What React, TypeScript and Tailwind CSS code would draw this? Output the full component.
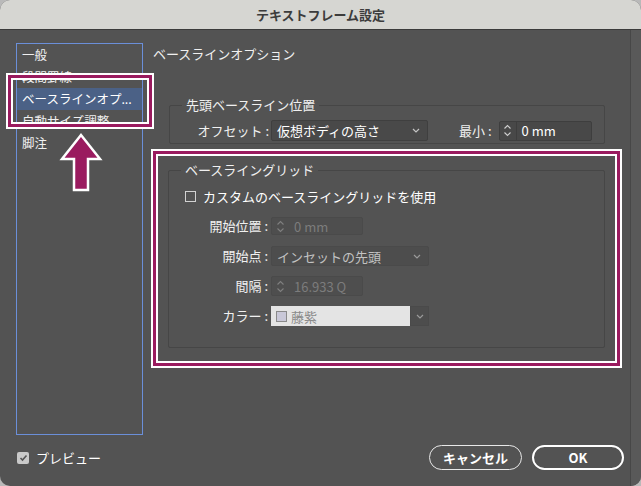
const Chevron = ({ className }: { className?: string }) => (
  <svg width="8" height="5" viewBox="0 0 8 5" className={className}>
    <path d="M1 1l3 3 3-3" fill="none" stroke="currentColor" strokeWidth="1.2" />
  </svg>
);

const StepIcon = ({ className }: { className?: string }) => (
  <svg width="9" height="15" viewBox="0 0 9 15" className={className}>
    <path d="M1.5 5.5L4.5 2.5l3 3M1.5 9.5l3 3 3-3" fill="none" stroke="currentColor" strokeWidth="1.1" />
  </svg>
);

const Label = ({ children }: { children: string }) => (
  <div className="w-[87px] shrink-0 text-right whitespace-nowrap">{children}</div>
);

const App = () => {
  const items = ['一般', '段間罫線', 'ベースラインオプ...', '自動サイズ調整', '脚注'];

  return (
    <div className="relative w-[641px] h-[486px] bg-[#b9b9b9] font-['Noto_Sans_CJK_JP','Noto_Sans',sans-serif] text-[13px] text-[#f0f0f0] overflow-hidden">
      <div className="flex flex-col h-full rounded-[10px] overflow-hidden bg-[#535353]">
        {/* title bar */}
        <div className="h-[30px] shrink-0 flex items-center justify-center bg-[#d6d6d2] border-b border-[#3b3b3b] text-[#3c3c3c] font-bold text-[13px] leading-none">
          テキストフレーム設定
        </div>

        <div className="flex flex-1 min-h-0">
          <div className="flex flex-col w-[630px]">
            <div className="flex pt-[13px] pl-[16px]">
              {/* sidebar */}
              <div className="w-[127px] h-[392px] shrink-0 border border-[#6b8fd9] text-[12.5px]">
                {items.map((it, i) => (
                  <div
                    key={it}
                    className={`h-[22px] leading-[22px] pl-[5px] pr-[3px] whitespace-nowrap ${i === 2 ? 'bg-[#4b6186] text-white' : ''}`}
                  >
                    {it}
                  </div>
                ))}
              </div>

              {/* main panel */}
              <div className="ml-[10px] flex-1">
                <div className="h-[22px] leading-[22px]">ベースラインオプション</div>

                <fieldset className="mt-[31px] ml-[16px] w-[436px] border border-[#464646] rounded-[2px] px-[12px] pb-[2px]">
                  <legend className="px-[4px] leading-[18px]">先頭ベースライン位置</legend>
                  <div className="flex items-center h-[21px] mt-[6px]">
                    <Label>オフセット :</Label>
                    <div className="ml-[2px] w-[157px] h-[21px] flex items-center justify-between pl-[5px] pr-[7px] bg-[#494949] border border-[#3f3f3f] rounded-[2px]">
                      <span className="leading-none text-white">仮想ボディの高さ</span>
                      <Chevron className="text-[#c4c4c4]" />
                    </div>
                    <div className="ml-[31px] whitespace-nowrap">最小 :</div>
                    <div className="ml-[7px] w-[93px] h-[20px] flex items-stretch bg-[#484848] border border-[#3e3e3e] rounded-[2px]">
                      <div className="w-[17px] flex items-center justify-center border-r border-[#3e3e3e] text-[#cfcfcf]">
                        <StepIcon />
                      </div>
                      <span className="pl-[5px] leading-[18px] text-white">0 mm</span>
                    </div>
                  </div>
                </fieldset>

                <fieldset className="mt-[17px] ml-[15px] w-[437px] border border-[#464646] rounded-[2px] px-[12px] pb-[21px]">
                  <legend className="px-[4px] leading-[18px]">ベースライングリッド</legend>
                  <div className="flex flex-col gap-[10px] mt-[7px]">
                    <div className="flex items-center h-[20px] ml-[4px]">
                      <div className="w-[11px] h-[11px] border border-[#d2d2d2]" />
                      <span className="ml-[7px] leading-none text-white">カスタムのベースライングリッドを使用</span>
                    </div>

                    <div className="flex items-center h-[20px]">
                      <Label>開始位置 :</Label>
                      <div className="ml-[3px] w-[92px] h-[18px] flex items-center bg-[#4e4e4e] border border-[#4a4a4a] rounded-[2px]">
                        <StepIcon className="ml-[4px] text-[#7f7f7f]" />
                        <span className="ml-[9px] leading-none text-[#7c7c7c]">0 mm</span>
                      </div>
                    </div>

                    <div className="flex items-center h-[20px]">
                      <Label>開始点 :</Label>
                      <div className="ml-[3px] w-[158px] h-[20px] flex items-center justify-between pl-[5px] pr-[7px] bg-[#4d4d4d] border border-[#4a4a4a] rounded-[2px]">
                        <span className="leading-none text-[#c2c2c2]">インセットの先頭</span>
                        <Chevron className="text-[#9a9a9a]" />
                      </div>
                    </div>

                    <div className="flex items-center h-[20px]">
                      <Label>間隔 :</Label>
                      <div className="ml-[3px] w-[92px] h-[20px] flex items-center bg-[#4e4e4e] border border-[#4a4a4a] rounded-[2px]">
                        <StepIcon className="ml-[4px] text-[#7f7f7f]" />
                        <span className="ml-[9px] leading-none text-[#7c7c7c]">16.933 Q</span>
                      </div>
                    </div>

                    <div className="flex items-center h-[20px]">
                      <Label>カラー :</Label>
                      <div className="ml-[3px] w-[158px] h-[20px] flex items-stretch">
                        <div className="w-[139px] flex items-center bg-[#e4e4e4]">
                          <div className="ml-[5px] w-[11px] h-[11px] bg-[#c9c8d8] border border-[#8a8a8a]" />
                          <span className="ml-[4px] leading-none text-[#8a8a8a]">藤紫</span>
                        </div>
                        <div className="flex-1 flex items-center justify-center bg-[#4d4d4d] border border-[#4a4a4a]">
                          <Chevron className="text-[#9a9a9a]" />
                        </div>
                      </div>
                    </div>
                  </div>
                </fieldset>
              </div>
            </div>

            {/* bottom bar */}
            <div className="flex items-center justify-between mt-[10px] h-[25px] pl-[17px] pr-[6px]">
              <div className="flex items-center">
                <div className="w-[12px] h-[12px] rounded-[2px] bg-[#c9c9c9] flex items-center justify-center">
                  <svg width="9" height="8" viewBox="0 0 9 8">
                    <path d="M1.5 4l2 2 4-4.5" fill="none" stroke="#555" strokeWidth="1.6" />
                  </svg>
                </div>
                <span className="ml-[7px] leading-none text-white">プレビュー</span>
              </div>
              <div className="flex items-center gap-[10px]">
                <button className="w-[93px] h-[25px] rounded-full border-[1.5px] border-[#e8e8e8] text-white font-bold leading-none">
                  キャンセル
                </button>
                <button className="w-[92px] h-[25px] rounded-full border-2 border-white text-white font-bold leading-none">
                  OK
                </button>
              </div>
            </div>
          </div>
          <div className="flex-1 border-l border-[#474747] bg-[#595959]" />
        </div>
      </div>

      {/* annotation overlays */}
      <div className="absolute left-[8px] top-[75px] w-[144px] h-[52px] border-[3px] border-[#9a1b5f] outline-2 outline-white shadow-[inset_0_0_0_2px_#fff]" />
      <div className="absolute left-[153px] top-[151px] w-[467px] h-[215px] border-[3px] border-[#9a1b5f] outline-2 outline-white shadow-[inset_0_0_0_2px_#fff]" />
      <svg className="absolute left-[56px] top-[130px]" width="50" height="64" viewBox="0 0 50 64">
        <path
          d="M25 5L44 29H32V60H18V29H6Z"
          fill="#9a1b5f"
          stroke="#fff"
          strokeWidth="2.5"
          strokeLinejoin="miter"
        />
      </svg>
    </div>
  );
};

export default App;
